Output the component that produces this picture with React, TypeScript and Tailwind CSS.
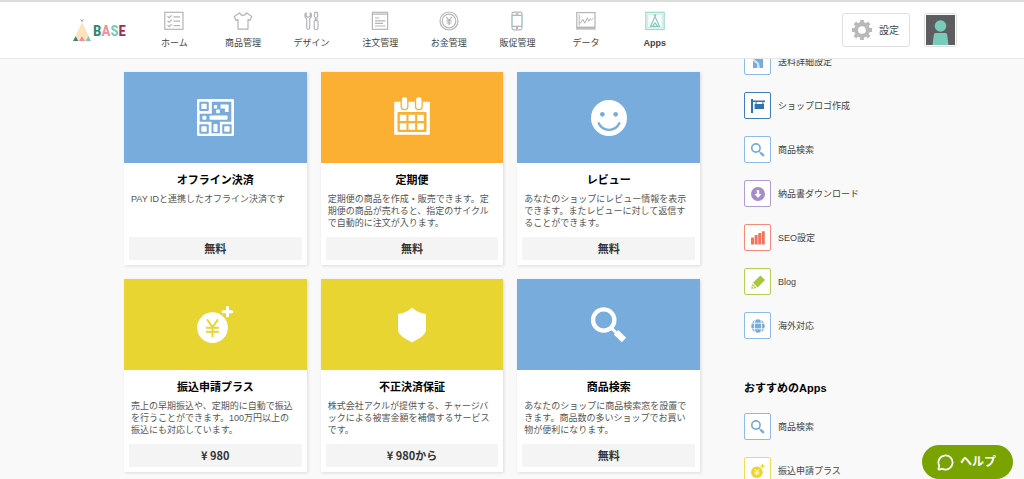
import React from 'react';
import { MessageCircle } from 'lucide-react';

type IconProps = { className?: string };

const ChecklistIcon = () => (
  <svg viewBox="0 0 20 20" className="size-5" fill="none" stroke="#b5b5b8" strokeWidth="1.2">
    <rect x="0.8" y="1.3" width="18.2" height="17" />
    <path d="M3.5 5.3l1.6 1.5L7.8 4.4M3.5 9.7l1.6 1.5 2.7-2.4M3.5 14.1l1.6 1.5 2.7-2.4M9.5 5.8H16M9.5 10.2H16M9.5 14.6H16" />
  </svg>
);

const ShirtIcon = () => (
  <svg viewBox="0 0 20 20" className="size-5" fill="none" stroke="#b5b5b8" strokeWidth="1.2" strokeLinejoin="round">
    <path d="M6.8 1.8L1.2 5.4l1.9 4 1.9-.8v9.6h10V8.6l1.9.8 1.9-4-5.6-3.6c-.8 3.4-5.6 3.4-6.4 0z" />
  </svg>
);

const ToolsIcon = () => (
  <svg viewBox="0 0 20 20" className="size-5" fill="none" stroke="#b5b5b8" strokeWidth="1.2" strokeLinejoin="round">
    <path d="M4.2 1.8C2.4 2.8 2.2 6 4.7 7.6v9.2c0 2 3 2 3 0V7.6c2.5-1.6 2.3-4.8.5-5.8v3.4l-2 1-2-1z" />
    <path d="M12.8 1.4h2.6l.4 3.8-1 1.6v2.4h-1.4V6.8l-1-1.6zM12.2 10.2c.6-1 3.2-1 3.8 0v7c0 1.8-3.8 1.8-3.8 0z" />
  </svg>
);

const OrderIcon = () => (
  <svg viewBox="0 0 20 20" className="size-5" fill="none" stroke="#b5b5b8" strokeWidth="1.2">
    <rect x="2.4" y="1.3" width="15.2" height="17" />
    <path d="M2.4 3.2h15.2M5 7h4M5 9.8h10.4M5 12.4h8M5 15h10.4" />
  </svg>
);

const CoinIcon = () => (
  <svg viewBox="0 0 20 20" className="size-5" fill="none" stroke="#b5b5b8" strokeWidth="1.2">
    <circle cx="10" cy="10" r="9" />
    <circle cx="10" cy="10" r="6.8" />
    <path d="M7.2 5.8L10 9.6l2.8-3.8M10 9.6v4.6M7.4 9.8h5.2M7.4 12h5.2" />
  </svg>
);

const PhoneIcon = () => (
  <svg viewBox="0 0 20 20" className="size-5" fill="none" stroke="#b5b5b8" strokeWidth="1.2">
    <rect x="5" y="1.2" width="10" height="17.6" rx="1.8" />
    <path d="M5 4.3h10M5 15.3h10M8.5 2.8h3" />
    <circle cx="10" cy="17" r="0.6" />
    <path d="M5 4.8v10M15 4.8v10" stroke="#a5d8cf" />
  </svg>
);

const ChartIcon = () => (
  <svg viewBox="0 0 20 20" className="size-5" fill="none" stroke="#b5b5b8" strokeWidth="1.2">
    <rect x="0.8" y="1.6" width="18.2" height="16.4" />
    <path d="M1 16.6h18" strokeWidth="2" />
    <path d="M3.2 3.6v11M3.2 11.8h1.6l2-3.6 2 4 2.5-5.4 1.5 3.4 1.5-2.4 1.2 1 2-1.6" strokeWidth="1" />
  </svg>
);

const AppsIcon = () => (
  <svg viewBox="0 0 20 20" className="size-5" fill="none" stroke="#84cdc0" strokeWidth="1.2">
    <rect x="0.8" y="1.3" width="18.4" height="17.2" fill="#edf8f6" stroke="#a0d8ce" />
    <rect x="2.8" y="3.3" width="14.4" height="13.2" fill="#fff" stroke="#d3ece7" />
    <path d="M9 3.6l1 2 1-2M10 5.6L5.4 15.4h9.2L10 5.6zM7.6 15.2l2.4-3.4 2.4 3.4" />
  </svg>
);

const GearIcon = () => (
  <svg viewBox="0 0 24 24" className="size-[22px] shrink-0" fill="none" stroke="#bababa">
    <circle cx="12" cy="12" r="6.4" strokeWidth="4.4" />
    <path d="M12 1v4M12 19v4M1 12h4M19 12h4M4.2 4.2l2.9 2.9M16.9 16.9l2.9 2.9M4.2 19.8l2.9-2.9M16.9 7.1l2.9-2.9" strokeWidth="4.2" />
  </svg>
);

const QrIcon = () => (
  <svg viewBox="0 0 110 110" className="size-[37px]">
    <rect width="110" height="110" rx="4" fill="#fff" />
    <g fill="#78acdd">
      <rect x="7" y="8" width="28" height="28" rx="3" />
      <path d="M44 8h58v60H68v34H43V68H8V44h36z" />
      <rect x="7" y="75" width="28" height="28" rx="3" />
      <rect x="75" y="75" width="28" height="28" rx="3" />
    </g>
    <g fill="#fff">
      <rect x="13" y="14" width="16" height="16" rx="2" />
      <rect x="13" y="81" width="16" height="16" rx="2" />
      <rect x="81" y="81" width="16" height="16" rx="2" />
      <rect x="16" y="50" width="12" height="12" rx="3" />
      <rect x="37" y="49" width="54" height="13" rx="3" />
      <rect x="49" y="74" width="12" height="24" rx="3" />
      <rect x="50" y="18" width="10" height="10" rx="2" />
      <rect x="57" y="31" width="11" height="11" rx="2" />
      <path d="M70 16h24v23H83V28H70z" />
    </g>
  </svg>
);

const CalendarIcon = () => (
  <svg viewBox="0 0 107 114" className="mb-1 h-[38px] w-9">
    <rect y="14" width="107" height="99" rx="3" fill="#fff" />
    <g fill="#fff" stroke="#fbaf33" strokeWidth="4">
      <rect x="21" y="-2" width="20" height="40" rx="10" />
      <rect x="64" y="-2" width="20" height="40" rx="10" />
    </g>
    <rect x="10" y="45" width="87" height="60" rx="3" fill="#fbaf33" />
    <path
      fill="#fff"
      d="M17 53h20v19H17zM43 53h20v19H43zM69 53h20v19H69zM17 79h20v19H17zM43 79h20v19H43zM69 79h20v19H69z"
    />
  </svg>
);

const SmileIcon = () => (
  <svg viewBox="0 0 108 108" className="size-9">
    <circle cx="54" cy="54" r="54" fill="#fff" />
    <circle cx="34" cy="43" r="7" fill="#78acdd" />
    <circle cx="74" cy="43" r="7" fill="#78acdd" />
    <path d="M23 70c12 26 50 26 62 0" fill="none" stroke="#78acdd" strokeWidth="7" strokeLinecap="round" />
  </svg>
);

const YenPlusIcon = ({ className = 'size-[37px]', yen = '#e9d532' }: IconProps & { yen?: string }) => (
  <svg viewBox="0 0 110 111" className={className}>
    <circle cx="46" cy="65" r="46" fill="currentColor" />
    <path d="M91 4v26M78 17h26" stroke="currentColor" strokeWidth="9" strokeLinecap="round" />
    <path
      d="M31 42l15 22 15-22M46 64v27M29 65h34M29 77h34"
      fill="none"
      stroke={yen}
      strokeWidth="6"
      strokeLinecap="round"
    />
  </svg>
);

const ShieldIcon = () => (
  <svg viewBox="0 0 86 108" className="h-9 w-7" fill="#fff">
    <path d="M43 0c11 11 25 18 43 20v48c0 20-28 30-43 40C28 98 0 88 0 68V20C18 18 32 11 43 0z" />
  </svg>
);

const SearchIcon = ({ className = 'size-9' }: IconProps) => (
  <svg viewBox="0 0 108 108" className={className} fill="none" stroke="currentColor">
    <circle cx="38" cy="39" r="32" strokeWidth="13" />
    <path d="M60 62l16 16" strokeWidth="9" />
    <path d="M75 76l24 23" strokeWidth="19" strokeLinejoin="round" />
  </svg>
);

const DeliveryIcon = () => (
  <svg viewBox="0 0 14 14" className="size-3.5" fill="currentColor">
    <path d="M2 0h10v13H2z" opacity="0.35" />
    <path d="M3 0h9v13H9L8 8 3 4zM2 6l4 3v4H2z" />
  </svg>
);

const SignIcon = () => (
  <svg viewBox="0 0 14 14" className="size-3.5" fill="currentColor">
    <path d="M0 0h2v14H0zM2 1.5h12V3H2zM4.6 3h1v2h-1zM11.4 3h1v2h-1zM3.6 5H13v5H3.6z" />
  </svg>
);

const DownloadIcon = () => (
  <svg viewBox="0 0 14 14" className="size-3.5">
    <circle cx="7" cy="7" r="7" fill="currentColor" />
    <path d="M5.8 3h2.4v4h2.3L7 11 3.5 7h2.3z" fill="#fff" />
  </svg>
);

const BarsIcon = () => (
  <svg viewBox="0 0 14 14" className="size-3.5" fill="currentColor">
    <rect x="0" y="6.5" width="3" height="7" rx="0.6" />
    <rect x="3.6" y="4" width="3" height="9.5" rx="0.6" />
    <rect x="7.2" y="2" width="3" height="11.5" rx="0.6" />
    <rect x="10.8" y="0.3" width="3" height="13.2" rx="0.6" />
  </svg>
);

const PencilIcon = () => (
  <svg viewBox="0 0 14 14" className="size-3.5" fill="currentColor">
    <path d="M9.4.4L14 5l-7.4 7.4L2 7.8zM1.4 8.8l4.2 4.2L.2 13.8z" />
    <path d="M1.6 9.9l2.6 2.6-2 .6-1.2-1.2z" fill="#fff" opacity="0.7" />
  </svg>
);

const GlobeIcon = () => (
  <svg viewBox="0 0 14 14" className="size-3.5">
    <circle cx="7" cy="7" r="6.8" fill="currentColor" />
    <path d="M0 4.2h14M0 9.8h14M4.4 0C3 4.4 3 9.6 4.4 14M9.6 0c1.4 4.4 1.4 9.6 0 14" fill="none" stroke="#fff" strokeWidth="0.9" />
  </svg>
);

const navItems = [
  { label: 'ホーム', icon: <ChecklistIcon /> },
  { label: '商品管理', icon: <ShirtIcon /> },
  { label: 'デザイン', icon: <ToolsIcon /> },
  { label: '注文管理', icon: <OrderIcon /> },
  { label: 'お金管理', icon: <CoinIcon /> },
  { label: '販促管理', icon: <PhoneIcon /> },
  { label: 'データ', icon: <ChartIcon /> },
  { label: 'Apps', icon: <AppsIcon />, active: true },
];

const apps = [
  {
    title: 'オフライン決済',
    text: 'PAY IDと連携したオフライン決済です',
    price: '無料',
    color: 'bg-[#78acdd]',
    icon: <QrIcon />,
  },
  {
    title: '定期便',
    text: '定期便の商品を作成・販売できます。定期便の商品が売れると、指定のサイクルで自動的に注文が入ります。',
    price: '無料',
    color: 'bg-[#fbaf33]',
    icon: <CalendarIcon />,
  },
  {
    title: 'レビュー',
    text: 'あなたのショップにレビュー情報を表示できます。またレビューに対して返信することができます。',
    price: '無料',
    color: 'bg-[#78acdd]',
    icon: <SmileIcon />,
  },
  {
    title: '振込申請プラス',
    text: '売上の早期振込や、定期的に自動で振込を行うことができます。100万円以上の振込にも対応しています。',
    price: '¥ 980',
    color: 'bg-[#e9d532]',
    icon: <YenPlusIcon />,
  },
  {
    title: '不正決済保証',
    text: '株式会社アクルが提供する、チャージバックによる被害金額を補償するサービスです。',
    price: '¥ 980から',
    color: 'bg-[#e9d532]',
    icon: <ShieldIcon />,
  },
  {
    title: '商品検索',
    text: 'あなたのショップに商品検索窓を設置できます。商品数の多いショップでお買い物が便利になります。',
    price: '無料',
    color: 'bg-[#78acdd]',
    icon: <SearchIcon />,
  },
];

const installed = [
  { label: '送料詳細設定', color: 'border-[#8dbce6] text-[#78acdd]', icon: <DeliveryIcon /> },
  { label: 'ショップロゴ作成', color: 'border-[#3f7fb5] text-[#2f74ae]', icon: <SignIcon /> },
  { label: '商品検索', color: 'border-[#8dbce6] text-[#78acdd]', icon: <SearchIcon className="size-3.5" /> },
  { label: '納品書ダウンロード', color: 'border-[#b59bd3] text-[#a78bca]', icon: <DownloadIcon /> },
  { label: 'SEO設定', color: 'border-[#f98a76] text-[#f5735c]', icon: <BarsIcon /> },
  { label: 'Blog', color: 'border-[#b5cf55] text-[#a6c63c]', icon: <PencilIcon /> },
  { label: '海外対応', color: 'border-[#8dbce6] text-[#78acdd]', icon: <GlobeIcon /> },
];

const recommended = [
  { label: '商品検索', color: 'border-[#8dbce6] text-[#78acdd]', icon: <SearchIcon className="size-3.5" /> },
  {
    label: '振込申請プラス',
    color: 'border-[#ecdc57] text-[#e9d532]',
    icon: <YenPlusIcon className="size-3.5" yen="#fff" />,
  },
];

const Logo = () => (
  <a href="#" aria-label="BASE" className="flex w-[53px] shrink-0 items-end">
    <svg viewBox="0 0 54 66" className="h-[22px] w-[18px] shrink-0">
      <path d="M27 9L0 66h54z" fill="#fbe3bd" />
      <path d="M21 0l6 10 6-10-6 3z" fill="#d98a96" />
      <path d="M8 52L0 66h16z" fill="#2f8a70" />
      <path d="M27 52l-9 14h18z" fill="#f0909d" />
      <path d="M46 52l8 14H38z" fill="#78cabb" />
    </svg>
    <span className="ml-0.5 font-['Roboto_Condensed','Open_Sans_Condensed','Roboto',sans-serif] text-[15px] leading-5 font-bold">
      <span className="text-[#2f8a70]">B</span>
      <span className="text-[#f0909d]">A</span>
      <span className="text-[#78cabb]">S</span>
      <span className="text-[#a3304a]">E</span>
    </span>
  </a>
);

const Header = () => (
  <header className="fixed inset-x-0 top-0 z-10 flex h-[59px] items-center border-t-2 border-b border-t-[#dcdcdc] border-b-[#e8e8e8] bg-white pr-[67px] pl-[73px]">
    <Logo />
    <nav className="ml-3.5 grid max-w-[549px] flex-1 grid-cols-8 pt-0.5">
      {navItems.map((item) => (
        <a key={item.label} href="#" className="flex flex-col items-center gap-1">
          {item.icon}
          <span className={`text-[9px] leading-4 whitespace-nowrap ${item.active ? 'font-bold' : ''}`}>{item.label}</span>
        </a>
      ))}
    </nav>
    <div className="ml-auto flex items-center gap-3.5">
      <button className="flex h-[34px] items-center gap-1.5 rounded-[3px] border border-[#dedede] bg-white px-2 text-[10px]">
        <GearIcon />
        <span className="pr-0.5">設定</span>
      </button>
      <button aria-label="アカウント" className="rounded-[3px] border border-[#dedede] bg-white p-px">
        <svg viewBox="0 0 29 30" className="h-[30px] w-[29px]">
          <rect width="29" height="30" fill="#5d5d60" />
          <circle cx="14.5" cy="11" r="5.8" fill="#78cabb" />
          <path d="M6.5 30l1.3-10c.2-1.4 1-2 2.2-2h9c1.2 0 2 .6 2.2 2l1.3 10z" fill="#78cabb" />
        </svg>
      </button>
    </div>
  </header>
);

const AppCard: React.FC<(typeof apps)[number]> = ({ title, text, price, color, icon }) => (
  <a href="#" className="flex flex-col bg-white pb-[5px] shadow-[1px_1px_3px_rgba(0,0,0,0.12)]">
    <div className={`flex h-[91px] items-center justify-center text-white ${color}`}>{icon}</div>
    <h3 className="mt-2 text-center text-[11px] leading-[18px] font-bold text-black">{title}</h3>
    <p className="mt-1 min-h-9 pr-3 pl-[7px] text-[9px] leading-3 text-[#555]">{text}</p>
    <p className="mx-[5px] mt-2 bg-[#f4f4f4] text-center font-['Noto_Sans_CJK_JP',sans-serif] text-[11px] leading-[23px] font-bold text-[#333]">
      {price}
    </p>
  </a>
);

const SideList: React.FC<{ items: typeof installed }> = ({ items }) => (
  <ul className="flex flex-col gap-[17px]">
    {items.map((item) => (
      <li key={item.label}>
        <a href="#" className="flex items-center gap-[7px]">
          <span className={`flex size-[27px] items-center justify-center rounded-[2px] border bg-white ${item.color}`}>
            {item.icon}
          </span>
          <span className="text-[9px] leading-4">{item.label}</span>
        </a>
      </li>
    ))}
  </ul>
);

export default function App() {
  return (
    <div
      lang="ja"
      className="h-screen overflow-hidden bg-[#f9f9f9] font-['Liberation_Sans','Noto_Sans_CJK_JP',sans-serif] text-[#444]"
    >
      <Header />
      <main className="mx-auto flex max-w-[776px] items-start gap-11 pt-12">
        <section className="mt-6 grid flex-1 grid-cols-3 gap-3.5">
          {apps.map((app) => (
            <AppCard key={app.title} {...app} />
          ))}
        </section>
        <aside className="w-39 shrink-0">
          <SideList items={installed} />
          <h2 className="mt-10 mb-4 text-[11px] leading-[18px] font-bold text-black">おすすめのApps</h2>
          <SideList items={recommended} />
        </aside>
      </main>
      <button className="fixed right-[11px] bottom-0 z-20 flex h-[34px] items-center gap-1.5 rounded-full bg-[#78a300] px-[15px] text-[12px] font-bold text-white">
        <MessageCircle className="size-[17px]" strokeWidth={2.5} />
        <span className="pr-0.5">ヘルプ</span>
      </button>
    </div>
  );
}
